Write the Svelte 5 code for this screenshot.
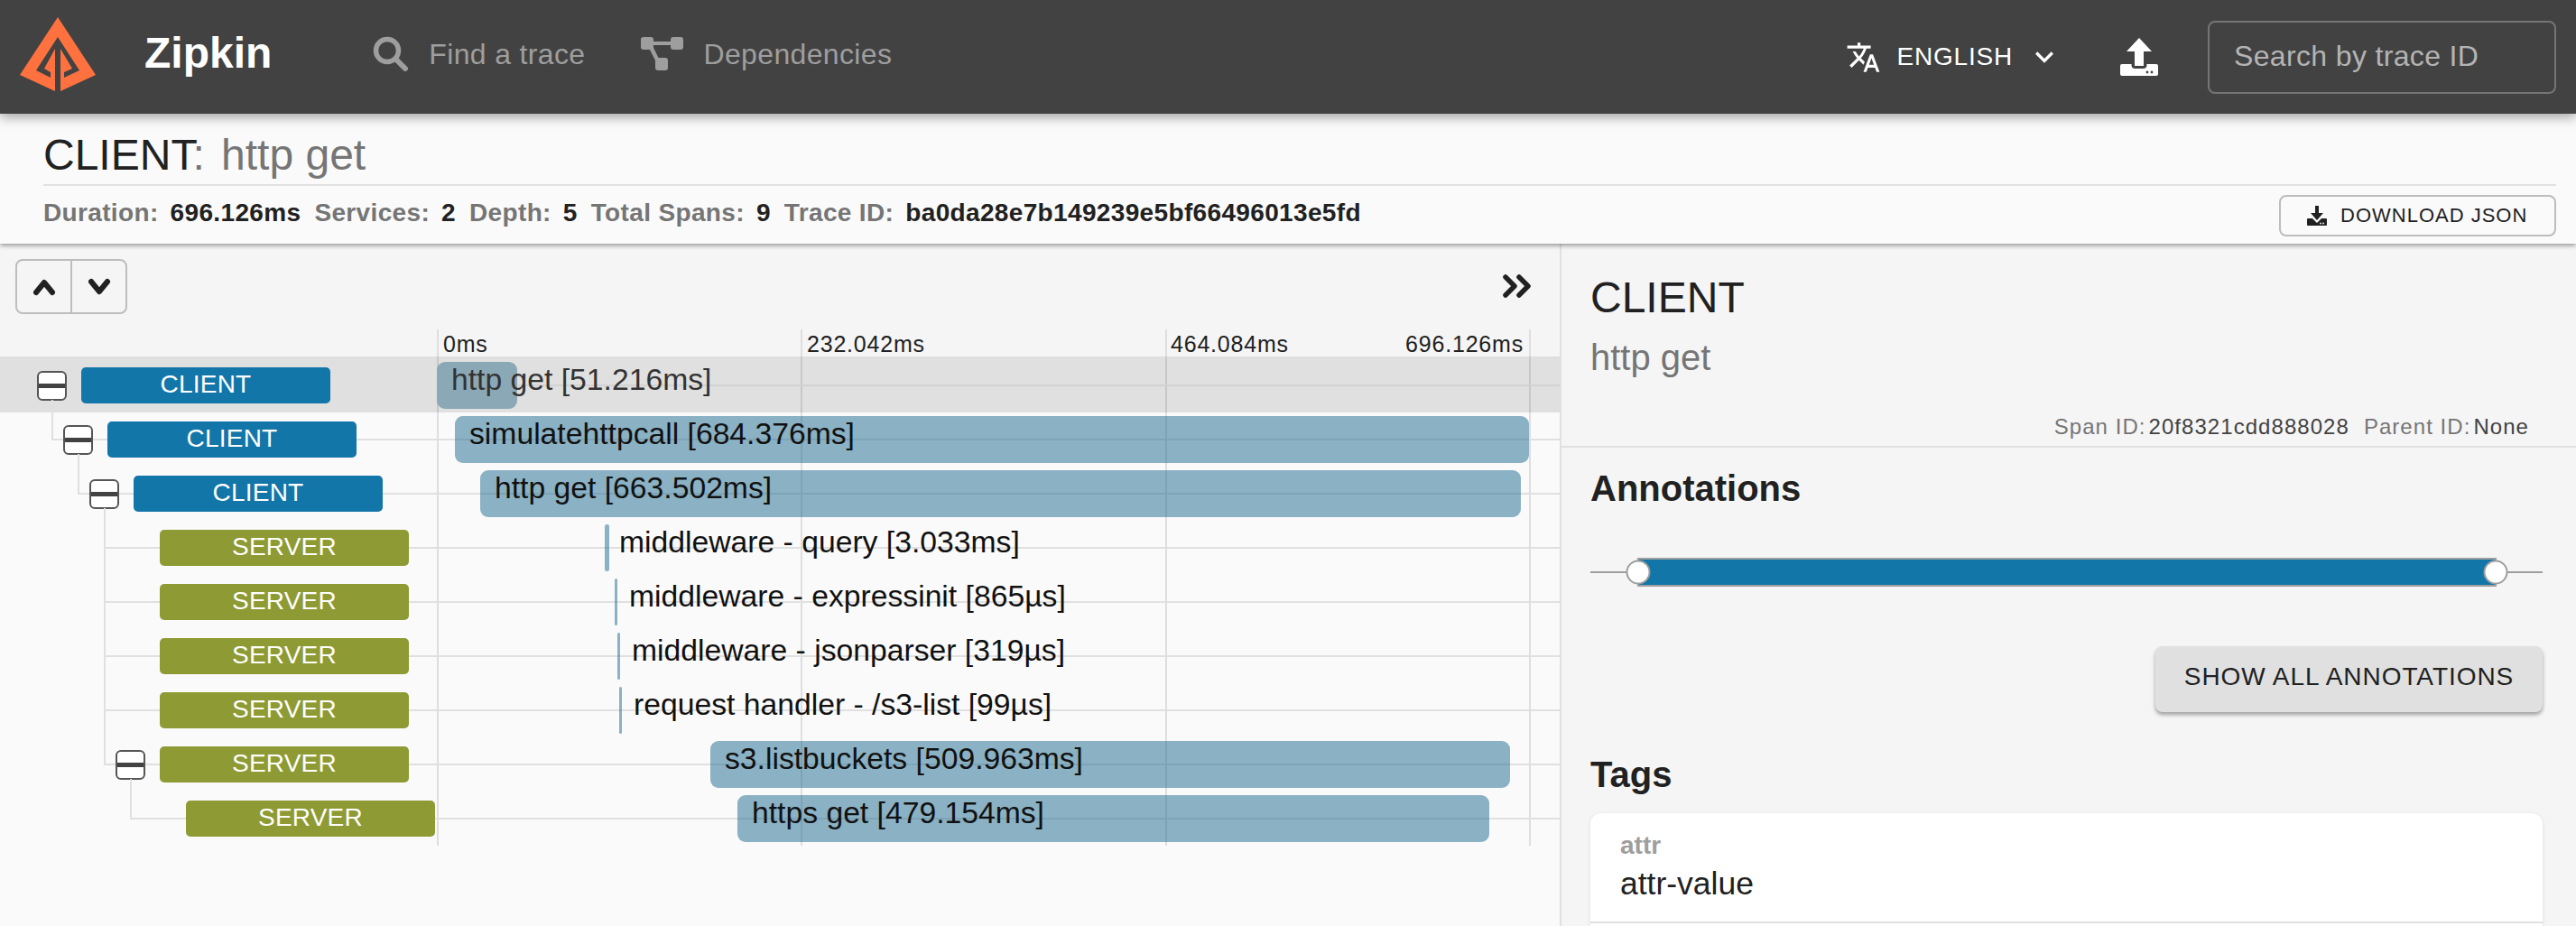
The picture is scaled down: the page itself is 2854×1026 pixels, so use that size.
<script lang="ts">
    const duration = 696.126
    const trackWidth = 1210

    // start offsets are in px of the track, easier to read off than ms here
    const spans = [
        { kind: "CLIENT", depth: 0, name: "http get", time: "51.216ms", ms: 51.216, start: 0, toggle: true, selected: true },
        { kind: "CLIENT", depth: 1, name: "simulatehttpcall", time: "684.376ms", ms: 684.376, start: 20, toggle: true },
        { kind: "CLIENT", depth: 2, name: "http get", time: "663.502ms", ms: 663.502, start: 48, toggle: true },
        { kind: "SERVER", depth: 3, name: "middleware - query", time: "3.033ms", ms: 3.033, start: 186 },
        { kind: "SERVER", depth: 3, name: "middleware - expressinit", time: "865µs", ms: 0.865, start: 197 },
        { kind: "SERVER", depth: 3, name: "middleware - jsonparser", time: "319µs", ms: 0.319, start: 200 },
        { kind: "SERVER", depth: 3, name: "request handler - /s3-list", time: "99µs", ms: 0.099, start: 202 },
        { kind: "SERVER", depth: 3, name: "s3.listbuckets", time: "509.963ms", ms: 509.963, start: 303, toggle: true },
        { kind: "SERVER", depth: 4, name: "https get", time: "479.154ms", ms: 479.154, start: 333 }
    ]

    const ticks = ["0ms", "232.042ms", "464.084ms", "696.126ms"]

    function barWidth(ms: number) {
        return Math.max(3, (ms / duration) * trackWidth)
    }

    // first child starts under the parent's toggle, siblings continue the line above
    function isFirstChild(i: number) {
        return i > 0 && spans[i].depth > spans[i - 1].depth
    }
</script>

<div class="page">
    <header class="nav">
        <svg class="logo" viewBox="0 0 130 130" width="130" height="130">
            <path fill="#ff7240" d="M64 21 106 85 67 103H61L22 85Z" />
            <path fill="#424242" d="M64 43 40 80 56 88V82L49 78 61 56V103H67V56L80 78 71 82V88L88 80Z" />
        </svg>
        <span class="brand">Zipkin</span>
        <nav class="links">
            <span class="link">
                <svg width="40" height="40" viewBox="0 0 40 40" fill="none" stroke="#9e9e9e">
                    <circle cx="16" cy="16" r="12.5" stroke-width="5.5" />
                    <line x1="27" y1="27" x2="36" y2="36" stroke-width="6" stroke-linecap="round" />
                </svg>
                Find a trace
            </span>
            <span class="link">
                <svg width="48" height="38" viewBox="0 0 48 38" fill="#9e9e9e" stroke="none">
                    <rect x="0" y="0" width="14" height="14" rx="3" />
                    <rect x="33" y="0" width="14" height="14" rx="3" />
                    <rect x="16" y="23" width="14" height="14" rx="3" />
                    <path d="M10 5h27v4H10z" />
                    <path d="M9 12l4-2 7 14-4 2z" />
                </svg>
                Dependencies
            </span>
        </nav>
        <div class="nav-right">
            <span class="lang">
                <svg width="39" height="39" viewBox="0 0 24 24" fill="#fff"><path d="M12.87 15.07l-2.54-2.51.03-.03c1.74-1.94 2.98-4.17 3.71-6.53H17V4h-7V2H8v2H1v1.99h11.17C11.5 7.92 10.44 9.75 9 11.35 8.07 10.32 7.3 9.19 6.69 8h-2c.73 1.63 1.73 3.17 2.98 4.56l-5.09 5.02L4 19l5-5 3.11 3.11.76-2.04zM18.5 10h-2L12 22h2l1.12-3h4.75L21 22h2l-4.5-12zm-2.62 7l1.62-4.33L19.12 17h-3.24z" /></svg>
                <span class="lang-name">ENGLISH</span>
                <svg width="40" height="40" viewBox="0 0 24 24" fill="#fff"><path d="M16.59 8.59L12 13.17 7.41 8.59 6 10l6 6 6-6z" /></svg>
            </span>
            <svg class="upload" width="42" height="42" viewBox="0 0 42 42">
                <rect y="29" width="42" height="13" rx="2" fill="#fff" />
                <rect x="12.5" y="26" width="17" height="8" rx="4" fill="#424242" />
                <path fill="#fff" d="M21 0 35 15H26V31H16V15H7Z" />
                <circle cx="30" cy="38" r="1.4" fill="#424242" />
                <circle cx="35" cy="38" r="1.4" fill="#424242" />
            </svg>
            <div class="search">Search by trace ID</div>
        </div>
    </header>

    <section class="trace-head">
        <h1 class="trace-title">CLIENT<span class="muted">:</span> <span class="muted trace-name">http get</span></h1>
        <div class="trace-info">
            <div class="stats">
                <span class="stat"><b class="label">Duration:</b><b>696.126ms</b></span>
                <span class="stat"><b class="label">Services:</b><b>2</b></span>
                <span class="stat"><b class="label">Depth:</b><b>5</b></span>
                <span class="stat"><b class="label">Total Spans:</b><b>9</b></span>
                <span class="stat"><b class="label">Trace ID:</b><b>ba0da28e7b149239e5bf66496013e5fd</b></span>
            </div>
            <button class="download">
                <svg width="22" height="22" viewBox="0 0 22 22">
                    <rect y="14" width="22" height="8" rx="1" fill="#212121" />
                    <path d="M5 11 11 17 17 11" fill="none" stroke="#fafafa" stroke-width="3" />
                    <path fill="#212121" d="M9 0H13V8H18L11 16 4 8H9Z" />
                    <circle cx="15" cy="19.5" r=".9" fill="#fafafa" />
                    <circle cx="18" cy="19.5" r=".9" fill="#fafafa" />
                </svg>
                DOWNLOAD JSON
            </button>
        </div>
    </section>

    <main class="content">
        <div class="timeline">
            <div class="toolbar">
                <div class="updown">
                    <span class="ud-btn">
                        <svg width="26" height="20" viewBox="0 0 26 20" fill="none" stroke="#212121" stroke-width="6" stroke-linecap="round" stroke-linejoin="round"><path d="M4 16 13 5 22 16" /></svg>
                    </span>
                    <span class="ud-btn">
                        <svg width="26" height="20" viewBox="0 0 26 20" fill="none" stroke="#212121" stroke-width="6" stroke-linecap="round" stroke-linejoin="round"><path d="M4 4 13 15 22 4" /></svg>
                    </span>
                </div>
                <svg class="collapse" width="34" height="26" viewBox="0 0 34 26" fill="none" stroke="#212121" stroke-width="5.5" stroke-linecap="round" stroke-linejoin="round"><path d="M4 3 14 13 4 23M19 3 29 13 19 23" /></svg>
            </div>

            <div class="tick-labels">
                {#each ticks as tick, i}
                    <span class="tick-label" class:last={i === ticks.length - 1}>{tick}</span>
                {/each}
            </div>

            <div class="rows">
                <div class="grid">
                    {#each ticks as tick}
                        <span class="grid-line"></span>
                    {/each}
                </div>
                {#each spans as span, i}
                    <div class="row" class:selected={span.selected}>
                        {#if span.depth > 0}
                            <span class="vline" class:first={isFirstChild(i)} style="left: {28 + span.depth * 29}px"></span>
                        {/if}
                        <span class="hline" style="left: {span.depth > 0 ? 28 + span.depth * 29 : 484}px"></span>
                        <div class="tree" style="padding-left: {41 + span.depth * 29}px">
                            {#if span.toggle}
                                <span class="toggle"></span>
                            {:else}
                                <span class="no-toggle"></span>
                            {/if}
                            <span class="badge {span.kind.toLowerCase()}">{span.kind}</span>
                        </div>
                        <div class="track">
                            <div class="bar" style="margin-left: {span.start}px; width: {barWidth(span.ms)}px"></div>
                            <span class="bar-label" style="left: {span.start + 16}px">{span.name} [{span.time}]</span>
                        </div>
                    </div>
                {/each}
            </div>
        </div>

        <aside class="detail">
            <div class="detail-head">
                <h2 class="detail-kind">CLIENT</h2>
                <div class="detail-name">http get</div>
                <div class="ids">
                    <span><span class="id-label">Span ID:</span>20f8321cdd888028</span>
                    <span><span class="id-label">Parent ID:</span>None</span>
                </div>
            </div>
            <div class="detail-body">
                <h3 class="section-title">Annotations</h3>
                <svg class="anno" width="1055" height="40" viewBox="0 0 1055 40">
                    <line x1="0" y1="20" x2="1055" y2="20" stroke="#9e9e9e" stroke-width="2" />
                    <rect x="53" y="5" width="950" height="30" fill="#1276a9" stroke="#9e9e9e" stroke-width="2" />
                    <circle cx="53" cy="20" r="12.5" fill="#fff" stroke="#9e9e9e" stroke-width="2" />
                    <circle cx="1003" cy="20" r="12.5" fill="#fff" stroke="#9e9e9e" stroke-width="2" />
                </svg>
                <div class="anno-actions">
                    <button class="show-all">SHOW ALL ANNOTATIONS</button>
                </div>
                <h3 class="section-title tags">Tags</h3>
                <div class="tag-card">
                    <div class="tag">
                        <div class="tag-key">attr</div>
                        <div class="tag-value">attr-value</div>
                    </div>
                </div>
            </div>
        </aside>
    </main>
</div>

<style>
    :global(body) {
        margin: 0;
        background: #fafafa;
    }

    .page {
        width: 2854px;
        height: 1026px;
        overflow: hidden;
        display: flex;
        flex-direction: column;
        font-family: "Liberation Sans", Arial, sans-serif;
        color: #212121;
    }

    .nav {
        height: 126px;
        flex: none;
        display: flex;
        align-items: center;
        background: #424242;
        position: relative;
        z-index: 3;
        box-shadow: 0 4px 12px rgba(0, 0, 0, 0.35);
    }

    .logo {
        flex: none;
    }

    .brand {
        margin-left: 30px;
        font-size: 48px;
        font-weight: 700;
        color: #fff;
        margin-top: -10px;
    }

    .links {
        display: flex;
        margin-left: 112px;
        gap: 61px;
        margin-top: -6px;
    }

    .link {
        display: flex;
        align-items: center;
        gap: 22px;
        font-size: 32px;
        letter-spacing: 0.35px;
        color: #9e9e9e;
    }

    .nav-right {
        margin-left: auto;
        margin-right: 22px;
        display: flex;
        align-items: center;
    }

    .lang {
        display: flex;
        align-items: center;
        color: #fff;
        font-size: 28px;
        letter-spacing: 0.8px;
    }

    .lang-name {
        margin-left: 17px;
        margin-right: 15px;
    }

    .upload {
        margin-left: 64px;
        margin-right: 55px;
    }

    .search {
        width: 355px;
        height: 75px;
        border: 2px solid #757575;
        border-radius: 8px;
        display: flex;
        align-items: center;
        padding-left: 27px;
        padding-bottom: 2px;
        font-size: 32px;
        letter-spacing: 0.35px;
        color: #b4b4b4;
    }

    .trace-head {
        height: 144px;
        flex: none;
        box-sizing: border-box;
        padding: 0 22px 0 48px;
        background: #fafafa;
        position: relative;
        z-index: 2;
        box-shadow: 0 2px 5px rgba(0, 0, 0, 0.4);
    }

    .trace-title {
        margin: 0;
        height: 80px;
        box-sizing: border-box;
        padding-top: 14px;
        font-size: 48px;
        line-height: 64px;
        font-weight: 400;
        border-bottom: 2px solid #e0e0e0;
    }

    .muted {
        color: #757575;
    }

    .trace-name {
        margin-left: 5px;
    }

    .trace-info {
        display: flex;
        justify-content: space-between;
        align-items: center;
        height: 64px;
    }

    .stats {
        display: flex;
        gap: 15px;
        font-size: 28px;
        letter-spacing: 0.35px;
        margin-top: -4px;
    }

    .stat {
        display: flex;
        gap: 13px;
    }

    .label {
        color: #757575;
    }

    .download {
        display: flex;
        align-items: center;
        gap: 15px;
        width: 307px;
        height: 46px;
        box-sizing: border-box;
        padding: 0 0 0 29px;
        margin-top: 2px;
        background: transparent;
        border: 2px solid #bdbdbd;
        border-radius: 8px;
        font-family: inherit;
        font-size: 22px;
        letter-spacing: 1px;
        color: #212121;
    }

    .content {
        flex: 1;
        display: flex;
        min-height: 0;
    }

    .timeline {
        width: 1728px;
        flex: none;
        border-right: 2px solid #e0e0e0;
        background: #fafafa;
    }

    .toolbar {
        height: 95px;
        background: #f5f5f5;
        display: flex;
        align-items: flex-start;
        justify-content: space-between;
        padding: 17px 30px 0 17px;
        box-sizing: border-box;
    }

    .updown {
        display: flex;
        width: 124px;
        height: 61px;
        box-sizing: border-box;
        border: 2px solid #bdbdbd;
        border-radius: 8px;
    }

    .ud-btn {
        flex: 1;
        display: flex;
        align-items: center;
        justify-content: center;
    }

    .ud-btn + .ud-btn {
        border-left: 2px solid #bdbdbd;
    }

    .collapse {
        margin-top: 17px;
    }

    .tick-labels {
        height: 32px;
        background: #f5f5f5;
        box-sizing: border-box;
        padding-left: 484px;
        display: flex;
    }

    .tick-label {
        width: 403px;
        flex: none;
        padding-left: 7px;
        box-sizing: border-box;
        font-size: 25px;
        letter-spacing: 0.8px;
        line-height: 32px;
    }

    .tick-label.last {
        width: 0;
        padding: 0;
        direction: rtl;
        margin-left: -5px;
        white-space: nowrap;
    }

    .rows {
        position: relative;
    }

    .grid {
        position: absolute;
        left: 484px;
        width: 1212px;
        top: -32px;
        bottom: 0;
        display: flex;
        justify-content: space-between;
    }

    .grid-line {
        width: 2px;
        background: #dedede;
    }

    .row {
        height: 60px;
        display: flex;
        align-items: center;
        position: relative;
    }

    .row.selected {
        background: rgba(0, 0, 0, 0.1);
        box-shadow: 0 -2px 0 rgba(0, 0, 0, 0.09);
    }

    .hline {
        position: absolute;
        right: 0;
        top: 29px;
        height: 2px;
        background: #e0e0e0;
    }

    .selected .hline {
        background: #d2d2d2;
    }

    .vline {
        position: absolute;
        top: -30px;
        height: 60px;
        width: 2px;
        background: #e0e0e0;
    }

    .vline.first {
        top: -14px;
        height: 45px;
    }

    .tree {
        width: 484px;
        flex: none;
        box-sizing: border-box;
        display: flex;
        align-items: center;
        gap: 16px;
        position: relative;
    }

    .toggle,
    .no-toggle {
        width: 33px;
        height: 33px;
        flex: none;
        box-sizing: border-box;
    }

    .toggle {
        position: relative;
        background: #fff;
        border: 2px solid #555;
        border-radius: 6px;
    }

    .toggle::after {
        content: "";
        position: absolute;
        left: 0;
        right: 0;
        top: 12px;
        height: 5px;
        background: #424242;
    }

    .badge {
        width: 276px;
        height: 40px;
        flex: none;
        border-radius: 5px;
        text-align: center;
        line-height: 38px;
        font-size: 28px;
        letter-spacing: 0.2px;
        color: #fff;
    }

    .badge.client {
        background: #1276a9;
    }

    .badge.server {
        background: #8e9a33;
    }

    .track {
        position: relative;
        flex: 1;
        height: 52px;
    }

    .bar {
        height: 52px;
        border-radius: 9px;
        background: rgba(26, 104, 142, 0.5);
    }

    .selected .bar {
        background: #8ba8b6;
    }

    .bar-label {
        position: absolute;
        top: 1px;
        line-height: 36px;
        font-size: 33.7px;
        white-space: nowrap;
        color: #111;
    }

    .selected .bar-label {
        color: #333;
    }

    .detail {
        flex: 1;
        min-width: 0;
        background: #f5f5f5;
    }

    .detail-head {
        height: 226px;
        box-sizing: border-box;
        padding: 28px 0 0 32px;
        border-bottom: 2px solid #e0e0e0;
    }

    .detail-kind {
        margin: 0;
        font-size: 48px;
        line-height: 64px;
        font-weight: 400;
    }

    .detail-name {
        margin-top: 2px;
        font-size: 40px;
        line-height: 64px;
        color: #757575;
    }

    .ids {
        display: flex;
        justify-content: flex-end;
        gap: 16px;
        margin-top: 25px;
        padding-right: 52px;
        font-size: 24px;
        line-height: 40px;
        letter-spacing: 1.05px;
        color: #424242;
    }

    .id-label {
        color: #757575;
        margin-right: 3px;
    }

    .detail-body {
        padding: 13px 37px 0 32px;
    }

    .section-title {
        margin: 0;
        font-size: 40px;
        line-height: 64px;
        font-weight: 700;
    }

    .anno {
        display: block;
        margin-top: 41px;
    }

    .anno-actions {
        display: flex;
        justify-content: flex-end;
        margin-top: 62px;
    }

    .show-all {
        width: 429px;
        height: 73px;
        border: none;
        border-radius: 8px;
        background: #e0e0e0;
        box-shadow: 0 3px 4px rgba(0, 0, 0, 0.35);
        font-family: inherit;
        font-size: 28px;
        letter-spacing: 0.95px;
        color: #212121;
        padding-bottom: 6px;
    }

    .tags {
        margin-top: 37px;
    }

    .tag-card {
        margin-top: 11px;
        background: #fff;
        border-radius: 12px 12px 0 0;
        box-shadow: 0 1px 4px rgba(0, 0, 0, 0.1);
        height: 200px;
    }

    .tag {
        height: 120px;
        padding-left: 33px;
        border-bottom: 2px solid #e0e0e0;
    }

    .tag-key {
        padding-top: 18px;
        font-size: 28px;
        line-height: 36px;
        font-weight: 700;
        color: #9e9e9e;
    }

    .tag-value {
        margin-top: 3px;
        font-size: 35.5px;
        line-height: 42px;
    }
</style>
